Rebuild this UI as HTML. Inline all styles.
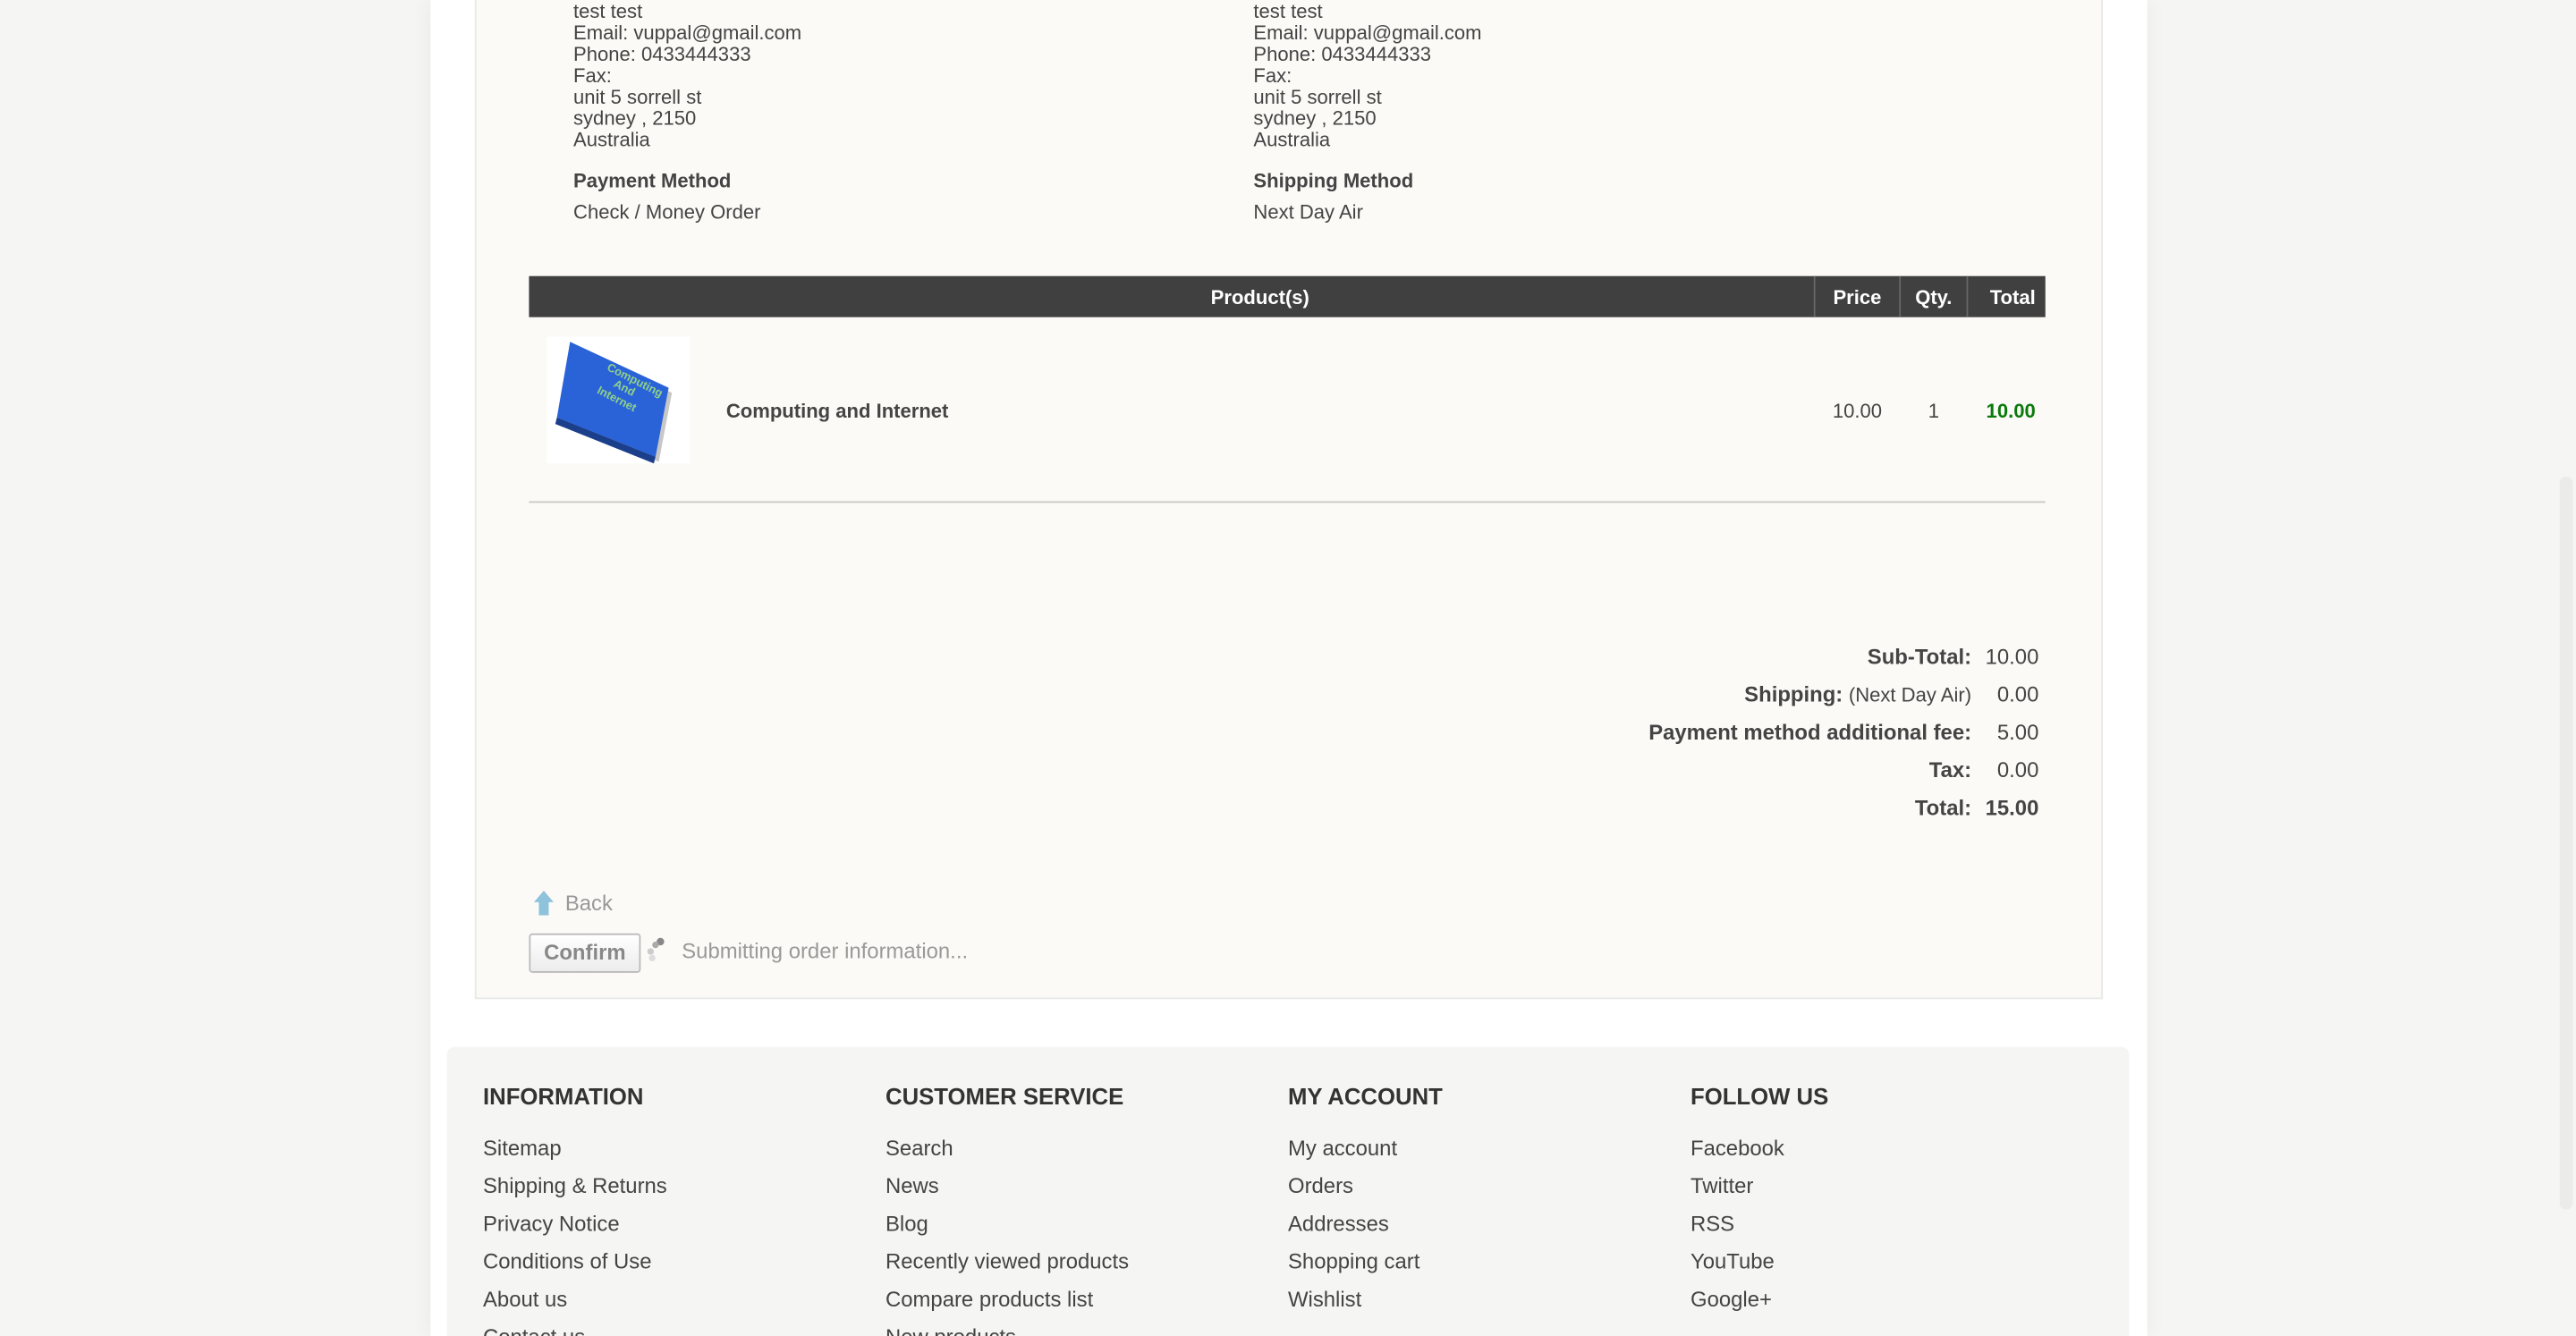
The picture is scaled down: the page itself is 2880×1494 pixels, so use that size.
<!DOCTYPE html>
<html><head><meta charset="utf-8"><style>
html,body{margin:0;padding:0;width:2880px;height:1494px;overflow:hidden;background:#f5f5f3;}
#w{position:absolute;left:0;top:0;width:1568px;height:813px;overflow:hidden;transform:scale(1.836735,1.837638);transform-origin:0 0;font-family:"Liberation Sans",Arial,sans-serif;color:#444;}
.a{position:absolute;white-space:nowrap;}
.addr{font-size:12px;line-height:13px;color:#444;}
.bold{font-weight:bold;}
.fh{font-size:14px;font-weight:bold;color:#333;}
.fl{font-size:13px;line-height:23px;color:#444;}
.tl{position:absolute;right:368px;text-align:right;font-size:13px;font-weight:bold;white-space:nowrap;}
.tv{position:absolute;left:1200px;width:41px;text-align:right;font-size:13px;white-space:nowrap;}
</style></head><body><div id="w">
<div class="a" style="left:262px;top:0;width:1045px;height:813px;background:#fff;box-shadow:0 0 12px rgba(0,0,0,0.06);"></div>
<div class="a" style="left:289px;top:0;width:989px;height:607px;background:#fbfaf7;border:1px solid #e8e8e6;border-top:none;"></div>
<div class="a addr" style="left:349px;top:1px;">test test<br>Email: vuppal@gmail.com<br>Phone: 0433444333<br>Fax:<br>unit 5 sorrell st<br>sydney , 2150<br>Australia</div>
<div class="a addr" style="left:763px;top:1px;">test test<br>Email: vuppal@gmail.com<br>Phone: 0433444333<br>Fax:<br>unit 5 sorrell st<br>sydney , 2150<br>Australia</div>
<div class="a bold" style="left:349px;top:103px;font-size:12px;">Payment Method</div>
<div class="a bold" style="left:763px;top:103px;font-size:12px;">Shipping Method</div>
<div class="a" style="left:349px;top:122px;font-size:12px;">Check / Money Order</div>
<div class="a" style="left:763px;top:122px;font-size:12px;">Next Day Air</div>
<div class="a" style="left:322px;top:168px;width:923px;height:25px;background:#404040;"></div>
<div class="a" style="left:1104px;top:168px;width:1px;height:25px;background:#666;"></div>
<div class="a" style="left:1156px;top:168px;width:1px;height:25px;background:#666;"></div>
<div class="a" style="left:1197px;top:168px;width:1px;height:25px;background:#666;"></div>
<div class="a bold" style="left:322px;top:174px;width:890px;text-align:center;color:#fff;font-size:12px;">Product(s)</div>
<div class="a bold" style="left:1105px;top:174px;width:51px;text-align:center;color:#fff;font-size:12px;">Price</div>
<div class="a bold" style="left:1157px;top:174px;width:40px;text-align:center;color:#fff;font-size:12px;">Qty.</div>
<div class="a bold" style="left:1198px;top:174px;width:41px;text-align:right;color:#fff;font-size:12px;">Total</div>
<div class="a" style="left:333px;top:205px;width:87px;height:77px;background:#fff;overflow:hidden;">
<svg width="87" height="77" viewBox="0 0 87 77"><polygon points="16,6 76,34 68,76 8,52" fill="#444" opacity="0.3"/><polygon points="14,3 74,31 66,73 6,49" fill="#2a63d8"/><polygon points="6,49 66,73 65,77 5,53" fill="#1b3f8a"/><text x="36" y="20" transform="rotate(27 36 20)" font-size="7" font-weight="bold" fill="#8fd08a" font-family="Liberation Sans">Computing</text><text x="40" y="30" transform="rotate(27 40 30)" font-size="7" font-weight="bold" fill="#8fd08a" font-family="Liberation Sans">And</text><text x="30" y="34" transform="rotate(27 30 34)" font-size="7" font-weight="bold" fill="#8fd08a" font-family="Liberation Sans">Internet</text></svg></div>
<div class="a bold" style="left:442px;top:243px;font-size:12px;color:#444;">Computing and Internet</div>
<div class="a" style="left:1105px;top:243px;width:51px;text-align:center;font-size:12px;">10.00</div>
<div class="a" style="left:1157px;top:243px;width:40px;text-align:center;font-size:12px;">1</div>
<div class="a bold" style="left:1198px;top:243px;width:41px;text-align:right;font-size:12px;color:#0a7a0a;">10.00</div>
<div class="a" style="left:322px;top:305px;width:923px;height:1px;background:#c8c8c8;"></div>
<div class="tl" style="top:392px;">Sub-Total:</div><div class="tv" style="top:392px;">10.00</div>
<div class="tl" style="top:415px;">Shipping: <span style="font-size:12px;font-weight:normal">(Next Day Air)</span></div><div class="tv" style="top:415px;">0.00</div>
<div class="tl" style="top:438px;">Payment method additional fee:</div><div class="tv" style="top:438px;">5.00</div>
<div class="tl" style="top:461px;">Tax:</div><div class="tv" style="top:461px;">0.00</div>
<div class="tl" style="top:484px;">Total:</div><div class="tv" style="top:484px;font-weight:bold;">15.00</div>
<svg class="a" style="left:324px;top:541px" width="14" height="16" viewBox="0 0 14 16"><polygon points="7,1 13,8 10,8 10,16 4,16 4,8 1,8" fill="#8fc3dc"/></svg>
<div class="a" style="left:344px;top:542px;font-size:13px;color:#999;">Back</div>
<div class="a bold" style="left:322px;top:568px;width:66px;height:22px;border:1px solid #bbb;border-radius:2px;background:linear-gradient(#fff,#ececec);color:#888;font-size:13px;line-height:22px;text-align:center;">Confirm</div>
<svg class="a" style="left:392px;top:570px" width="14" height="16"><circle cx="10" cy="3" r="2.3" fill="#888"/><circle cx="7" cy="5" r="2" fill="#aaa"/><circle cx="4" cy="9" r="2" fill="#ccc"/><circle cx="5" cy="13" r="2" fill="#ddd"/></svg>
<div class="a" style="left:415px;top:571px;font-size:13px;color:#999;">Submitting order information...</div>
<div class="a" style="left:272px;top:637px;width:1024px;height:176px;background:#f5f5f3;border-radius:5px 5px 0 0;"></div>
<div class="a fh" style="left:294px;top:659px;">INFORMATION</div>
<div class="a fh" style="left:539px;top:659px;">CUSTOMER SERVICE</div>
<div class="a fh" style="left:784px;top:659px;">MY ACCOUNT</div>
<div class="a fh" style="left:1029px;top:659px;">FOLLOW US</div>
<div class="a fl" style="left:294px;top:687px;">Sitemap<br>Shipping &amp; Returns<br>Privacy Notice<br>Conditions of Use<br>About us<br>Contact us</div>
<div class="a fl" style="left:539px;top:687px;">Search<br>News<br>Blog<br>Recently viewed products<br>Compare products list<br>New products</div>
<div class="a fl" style="left:784px;top:687px;">My account<br>Orders<br>Addresses<br>Shopping cart<br>Wishlist</div>
<div class="a fl" style="left:1029px;top:687px;">Facebook<br>Twitter<br>RSS<br>YouTube<br>Google+</div>
<div class="a" style="left:1558px;top:290px;width:8px;height:446px;background:#ebebe9;border-radius:4px;"></div>
</div></body></html>
